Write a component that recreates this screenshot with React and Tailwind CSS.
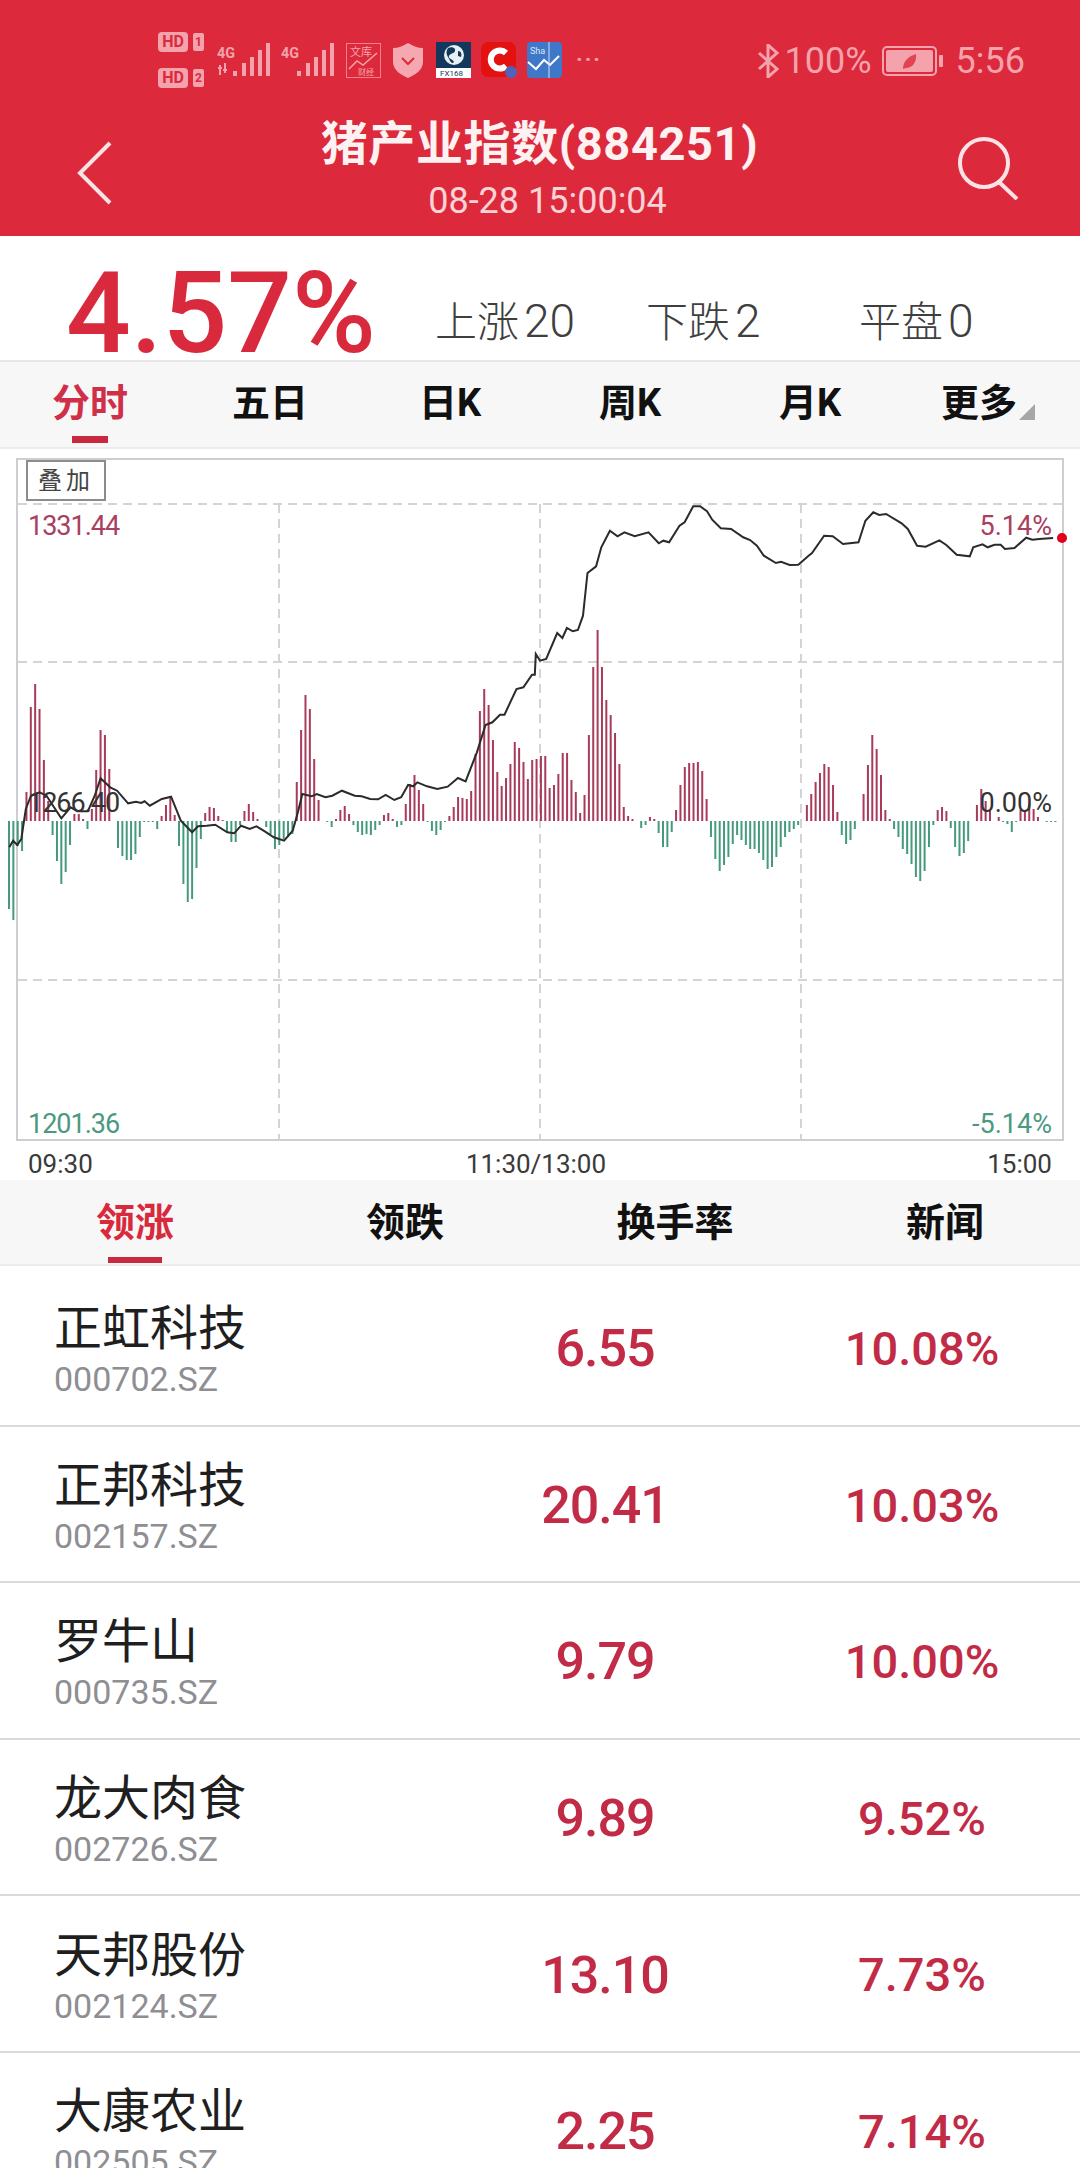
import React from "react";

// volume bars, one per minute, up = red / down = green
const bars = [
  -88, -99, -25, -30, 29, 114, 137, 112, 61, 20, -14, -40, -63, -51, -24, 7, 7, 2, -8, 12, 51, 91, 86, 52, 0, -27, -35, -39, -39, -33,
  -16, -1, -1, -1, -8, 5, 16, 25, 6, -25, -63, -81, -78, -47, -18, 8, 14, 13, 5, 1, -11, -21, -21, -4, 10, 17, 9, 2, 0, -6,
  -13, -28, -24, -18, -16, -13, 39, 91, 126, 112, 62, 21, 0, -1, -6, 2, 11, 15, 7, -4, -11, -14, -13, -14, -9, -4, 6, 8, 2, -6,
  -4, 17, 37, 46, 31, 17, -1, -10, -14, -9, -1, 5, 14, 24, 23, 22, 30, 67, 110, 132, 116, 81, 49, 35, 43, 57, 79, 73, 59, 42,
  61, 62, 65, 65, 33, 36, 47, 68, 68, 41, 29, 8, 26, 86, 154, 191, 154, 121, 106, 88, 57, 14, 5, 2, 0, -7, -4, 4, 2, -12,
  -26, -26, -11, 11, 36, 54, 58, 58, 59, 50, 22, -16, -38, -50, -44, -36, -23, -14, -19, -24, -28, -28, -32, -39, -48, -46, -36, -26, -16, -11,
  -8, -4, 0, 16, 27, 39, 48, 57, 54, 36, 9, -14, -23, -19, -8, 0, 27, 56, 86, 72, 46, 11, 2, -8, -16, -28, -33, -43, -56, -60,
  -50, -26, -4, 11, 14, 10, -7, -26, -35, -32, -20, 0, 16, 32, 20, 10, 0, 4, -1, -3, -11, -1, 11, 11, 17, 12, 4, 0, -1, -1, -1,
];

// price line traced off the picture, left and right half of the chart
const lineLeft = [
  [27, 1105], [38, 1085], [50, 1098], [62, 1080], [75, 990], [90, 950], [115, 940], [135, 950], [178, 1018], [205, 985], [225, 997], [255, 997],
  [275, 950], [292, 898], [320, 925], [340, 935], [372, 973], [395, 968], [410, 972], [420, 967], [435, 980], [470, 960], [497, 953], [525, 1025],
  [558, 1060], [575, 1042], [600, 1040], [625, 1037], [660, 1060], [680, 1063], [700, 1040], [725, 1050], [745, 1042], [770, 1058], [795, 1075],
  [825, 1085], [850, 1055], [865, 1000], [878, 945], [905, 952], [920, 945], [945, 955], [965, 950], [993, 935], [1030, 950], [1050, 952],
  [1075, 960], [1098, 961], [1120, 948], [1145, 963], [1165, 955], [1185, 918], [1200, 922], [1212, 910], [1240, 922], [1270, 930], [1300, 923],
  [1330, 897], [1352, 907], [1385, 820], [1410, 738], [1430, 730], [1452, 707], [1465, 707], [1500, 630], [1520, 625], [1545, 587], [1553, 587],
  [1556, 525],
];
const lineRight = [
  [0, 545], [18, 540], [50, 462], [65, 477], [78, 447], [95, 457], [110, 453], [125, 410], [138, 282], [163, 262], [178, 205], [203, 155], [225, 172],
  [245, 160], [275, 172], [315, 160], [345, 193], [358, 185], [375, 190], [405, 140], [420, 130], [445, 82], [465, 82], [485, 97], [500, 122],
  [525, 148], [555, 150], [590, 175], [610, 183], [630, 200], [650, 230], [685, 252], [700, 248], [725, 258], [750, 257], [780, 230], [790, 222],
  [825, 170], [850, 172], [880, 195], [925, 190], [945, 125], [968, 100], [985, 108], [1005, 105], [1050, 133], [1068, 150], [1095, 200], [1120, 203],
  [1160, 184], [1180, 198], [1210, 227], [1248, 232], [1258, 205], [1285, 196], [1300, 205], [1320, 197], [1338, 197], [1350, 210], [1378, 207],
  [1412, 176], [1430, 182], [1450, 180], [1490, 177],
];
const linePoints = [
  ...lineLeft.map(([x, y]) => [x / 2.904, 480 + y / 3]),
  ...lineRight.map(([x, y]) => [540 + x / 2.904, 480 + y / 3]),
]
  .map(([x, y]) => `${x.toFixed(1)},${y.toFixed(1)}`)
  .join(" ");

const stocks = [
  { name: "正虹科技", code: "000702.SZ", price: "6.55", pct: "10.08%" },
  { name: "正邦科技", code: "002157.SZ", price: "20.41", pct: "10.03%" },
  { name: "罗牛山", code: "000735.SZ", price: "9.79", pct: "10.00%" },
  { name: "龙大肉食", code: "002726.SZ", price: "9.89", pct: "9.52%" },
  { name: "天邦股份", code: "002124.SZ", price: "13.10", pct: "7.73%" },
  { name: "大康农业", code: "002505.SZ", price: "2.25", pct: "7.14%" },
];

const HdBadge = ({ n }) => (
  <div className="flex items-center gap-[5px] h-[20px]">
    <span className="w-[30px] h-[20px] rounded-[4px] bg-[#f4a3ac] text-[#dc2a3c] text-[16px] font-bold leading-[20px] text-center">HD</span>
    <span className="w-[11px] h-[18px] rounded-[2px] bg-[#f4a3ac] text-[#dc2a3c] text-[12px] font-bold leading-[18px] text-center">{n}</span>
  </div>
);

const Signal = ({ arrows }) => (
  <svg width="54" height="34" viewBox="0 0 54 34" className="text-[#f4a3ac]">
    <text x="0" y="15" fontSize="15" fontWeight="700" fill="currentColor" textLength="18" lengthAdjust="spacingAndGlyphs">4G</text>
    {arrows && <path d="M3 22v10M8 20v10M1 25h4M6 27h4" stroke="currentColor" strokeWidth="2" />}
    <rect x="16" y="28" width="4" height="5" fill="currentColor" />
    <rect x="25" y="20" width="4" height="13" fill="currentColor" />
    <rect x="33" y="14" width="4" height="19" fill="currentColor" />
    <rect x="41" y="7" width="4" height="26" fill="currentColor" />
    <rect x="49" y="0" width="4" height="33" fill="currentColor" />
  </svg>
);

const WenkuIcon = () => (
  <svg width="35" height="35" viewBox="0 0 35 35">
    <rect x="0.5" y="0.5" width="34" height="34" fill="none" stroke="#f4808c" />
    <text x="4" y="13" fontSize="11" fill="#f7a4ad">文库</text>
    <path d="M3 26l8-8 6 4 14-12" fill="none" stroke="#f7a4ad" strokeWidth="1.5" />
    <text x="12" y="32" fontSize="8" fill="#f7a4ad">财经</text>
  </svg>
);

const ShieldIcon = () => (
  <svg width="30" height="35" viewBox="0 0 30 35">
    <path d="M15 0C20 3 25 5 30 5V19C30 27 22 32 15 35 8 32 0 27 0 19V5C5 5 10 3 15 0Z" fill="#f5a8b0" />
    <path d="M9 15l6 6 6-6" fill="none" stroke="#dc2a3c" strokeWidth="2" />
  </svg>
);

const Fx168Icon = () => (
  <svg width="35" height="36" viewBox="0 0 35 36">
    <rect width="35" height="36" fill="#12395c" />
    <circle cx="18" cy="13" r="10" fill="#e8f0f5" />
    <path d="M12 6c4-2 8 0 7 3s-5 2-6 5 4 3 5 6c-3 3-4-2-6-5s-2-6 0-9zM22 9c3 0 4 3 3 6l-3-1z" fill="#12395c" />
    <rect y="26" width="35" height="10" fill="#fff" />
    <text x="4" y="34" fontSize="8" fill="#12395c">FX168</text>
  </svg>
);

const CIcon = () => (
  <svg width="36" height="36" viewBox="0 0 36 36">
    <rect width="35" height="35" rx="7" fill="#e3110f" />
    <path d="M25 11a9 9 0 1 0 0 13" fill="none" stroke="#fff" strokeWidth="6" />
    <circle cx="30" cy="30" r="6" fill="#4f63b8" />
  </svg>
);

const CheckIcon = () => (
  <svg width="35" height="36" viewBox="0 0 35 36">
    <rect width="35" height="36" rx="4" fill="#3f78c9" />
    <path d="M1 20l8 7 8-9 6 5 9-9" fill="none" stroke="#fff" strokeWidth="2" />
    <path d="M22 0v36" stroke="#cfe0f5" />
    <text x="3" y="12" fontSize="9" fill="#dbe8f8">Sha</text>
  </svg>
);

const BluetoothIcon = () => (
  <svg width="23" height="34" viewBox="0 0 23 34">
    <path d="M2 9l18 16-9 8V1l9 8L2 25" fill="none" stroke="#f4a3ac" strokeWidth="3" />
  </svg>
);

const BatteryIcon = () => (
  <svg width="62" height="30" viewBox="0 0 62 30">
    <rect x="1" y="1" width="53" height="28" rx="4" fill="none" stroke="#f4a3ac" strokeWidth="2" />
    <rect x="4" y="4" width="47" height="22" rx="2" fill="#f4a3ac" />
    <rect x="57" y="9" width="4" height="12" rx="1" fill="#f4a3ac" />
    <path d="M21 23c0-8 6-13 13-15 1 7-3 14-10 14z" fill="#dc2a3c" opacity="0.8" />
  </svg>
);

const ChartGrid = () => (
  <svg className="absolute inset-0 w-[1080px] h-[730px]" viewBox="0 450 1080 730">
    <g stroke="#d4d4d6" strokeWidth="2" strokeDasharray="9 6" fill="none">
      <path d="M18 505H1062M18 663H1062M18 981H1062" />
      <path d="M279 505V1140M540 505V1140M801 505V1140" />
    </g>
    {bars.map((v, i) =>
      v === 0 ? null : (
        <rect
          key={i}
          x={8 + i * 4.36}
          y={v > 0 ? 822 - v : 822}
          width="2"
          height={Math.abs(v)}
          fill={v > 0 ? "#a83a5a" : "#469a7c"}
        />
      )
    )}
    <polyline points={linePoints} fill="none" stroke="#2b2b2b" strokeWidth="2" />
    <circle cx="1062" cy="539" r="5" fill="#e0001b" />
  </svg>
);

const Stat = ({ label, value, className }) => (
  <span className={`absolute top-[60px] text-[42px] leading-[50px] font-light text-[#3f3f3f] ${className}`}>
    {label}
    <span className="ml-[5px] text-[46px]">{value}</span>
  </span>
);

const App = () => {
  return (
    <div className="w-[1080px] h-[2168px] overflow-hidden bg-white font-['Roboto','Noto_Sans_CJK_SC',sans-serif]">
      {/* Red header with status bar */}
      <div className="h-[236px] bg-[#dc2a3c] pt-[32px]">
        <div className="flex items-center h-[56px] pl-[158px] pr-[55px]">
          <div className="flex flex-col justify-between h-[56px] w-[59px]">
            <HdBadge n="1" />
            <HdBadge n="2" />
          </div>
          <Signal arrows />
          <div className="w-[10px]" />
          <Signal />
          <div className="w-[11px]" />
          <WenkuIcon />
          <div className="w-[12px]" />
          <ShieldIcon />
          <div className="w-[13px]" />
          <Fx168Icon />
          <div className="w-[10px]" />
          <CIcon />
          <div className="w-[10px]" />
          <CheckIcon />
          <div className="ml-[14px] text-[#f4a3ac] text-[22px] leading-none tracking-[2px] font-bold">···</div>
          <div className="ml-auto flex items-center pt-[2px]">
            <BluetoothIcon />
            <span className="ml-[5px] text-[36px] text-[#f4a3ac] leading-none">100%</span>
            <div className="ml-[10px] flex"><BatteryIcon /></div>
            <span className="ml-[12px] text-[36px] text-[#f4a3ac] leading-none">5:56</span>
          </div>
        </div>
        <div className="flex items-center justify-between h-[104px] mt-[28px] pl-[77px] pr-[60px]">
          <svg width="36" height="64" viewBox="0 0 36 64" className="mt-[10px]">
            <path d="M33 2L3 32l30 30" fill="none" stroke="#fbe3e5" strokeWidth="4" />
          </svg>
          <div className="flex flex-col items-center pl-[10px]">
            <span className="text-[47px] leading-[56px] font-bold tracking-[0.6px] text-[#fdf1f2]">猪产业指数(884251)</span>
            <span className="mt-[10px] ml-[16px] text-[36px] leading-[38px] text-[#fad3d7]">08-28 15:00:04</span>
          </div>
          <svg width="64" height="64" viewBox="0 0 64 64">
            <circle cx="28" cy="27" r="24" fill="none" stroke="#fbe3e5" strokeWidth="4" />
            <path d="M43 46l18 17" stroke="#fbe3e5" strokeWidth="4" />
          </svg>
        </div>
      </div>

      {/* Index summary */}
      <div className="relative h-[126px] border-b-2 border-[#e6e6e6]">
        <span className="absolute left-[66px] top-[12px] text-[114px] leading-[130px] font-medium text-[#d92a3d]">4.57%</span>
        <Stat label="上涨" value="20" className="left-[435px]" />
        <Stat label="下跌" value="2" className="left-[646px]" />
        <Stat label="平盘" value="0" className="left-[859px]" />
      </div>

      {/* Period tabs */}
      <div className="grid grid-cols-6 h-[87px] bg-[#f7f7f7] border-b-2 border-[#ececec]">
        {["分时", "五日", "日K", "周K", "月K"].map((t, i) => (
          <div key={t} className="relative flex items-center justify-center pb-[2px]">
            <span className={`text-[38px] font-bold ${i === 0 ? "text-[#cf3048]" : "text-[#111]"}`}>{t}</span>
            {i === 0 && <div className="absolute bottom-[4px] left-[72px] w-[36px] h-[7px] bg-[#c8293e]" />}
          </div>
        ))}
        <div className="flex items-center justify-center pb-[2px] pr-[4px]">
          <span className="text-[38px] font-bold text-[#111]">更多</span>
          <svg width="16" height="16" viewBox="0 0 16 16" className="mt-[16px] ml-[2px]">
            <path d="M16 0V16H0Z" fill="#a6a6a6" />
          </svg>
        </div>
      </div>

      {/* Intraday chart */}
      <div className="relative h-[731px] pt-[9px]">
        <div className="ml-[16px] w-[1048px] h-[683px] border-2 border-[#cdcdd2]" />
        <ChartGrid />
        <div className="absolute left-[26px] top-[11px] w-[80px] h-[41px] border-2 border-[#8c8c8c] bg-white text-center text-[24px] leading-[38px] tracking-[4px] text-[#444]">叠加</div>
        <span className="absolute left-[28px] top-[64px] text-[27px] leading-[27px] tracking-[-1px] text-[#a8405f]">1331.44</span>
        <span className="absolute right-[28px] top-[64px] text-[27px] leading-[27px] text-[#a8405f]">5.14%</span>
        <span className="absolute left-[28px] top-[341px] text-[27px] leading-[27px] tracking-[-1px] text-[#333]">1266.40</span>
        <span className="absolute right-[28px] top-[341px] text-[27px] leading-[27px] text-[#333]">0.00%</span>
        <span className="absolute left-[28px] top-[662px] text-[27px] leading-[27px] tracking-[-1px] text-[#4b9a80]">1201.36</span>
        <span className="absolute right-[28px] top-[662px] text-[27px] leading-[27px] text-[#4b9a80]">-5.14%</span>
        <div className="flex justify-between px-[28px] mt-[8px] text-[26px] leading-[30px] text-[#3a3a3a]">
          <span>09:30</span>
          <span className="-ml-[8px]">11:30/13:00</span>
          <span>15:00</span>
        </div>
      </div>

      {/* Ranking tabs */}
      <div className="grid grid-cols-4 h-[86px] bg-[#f7f7f7] border-b-2 border-[#ececec]">
        {["领涨", "领跌", "换手率", "新闻"].map((t, i) => (
          <div key={t} className="relative flex items-center justify-center pt-[3px]">
            <span className={`text-[39px] font-bold ${i === 0 ? "text-[#d92a3d]" : "text-[#111]"}`}>{t}</span>
            {i === 0 && <div className="absolute bottom-[1px] left-[108px] w-[54px] h-[6px] bg-[#c8293e]" />}
          </div>
        ))}
      </div>

      {/* Stock rows */}
      <div className="pt-[4px]">
        {stocks.map((s) => (
          <div key={s.code} className="flex items-center h-[156.6px] pt-[4px] border-b-2 border-[#d9d9dc]">
            <div className="w-[420px] pl-[54px]">
              <div className="text-[48px] leading-[60px] text-[#1f1f1f]">{s.name}</div>
              <div className="text-[34px] leading-[40px] text-[#8e8e93]">{s.code}</div>
            </div>
            <div className="w-[370px] text-center text-[52px] font-medium tracking-[-1px] text-[#c22b46]">{s.price}</div>
            <div className="w-[264px] text-center text-[47px] font-medium text-[#c22b46]">{s.pct}</div>
          </div>
        ))}
      </div>
    </div>
  );
};

export default App;
